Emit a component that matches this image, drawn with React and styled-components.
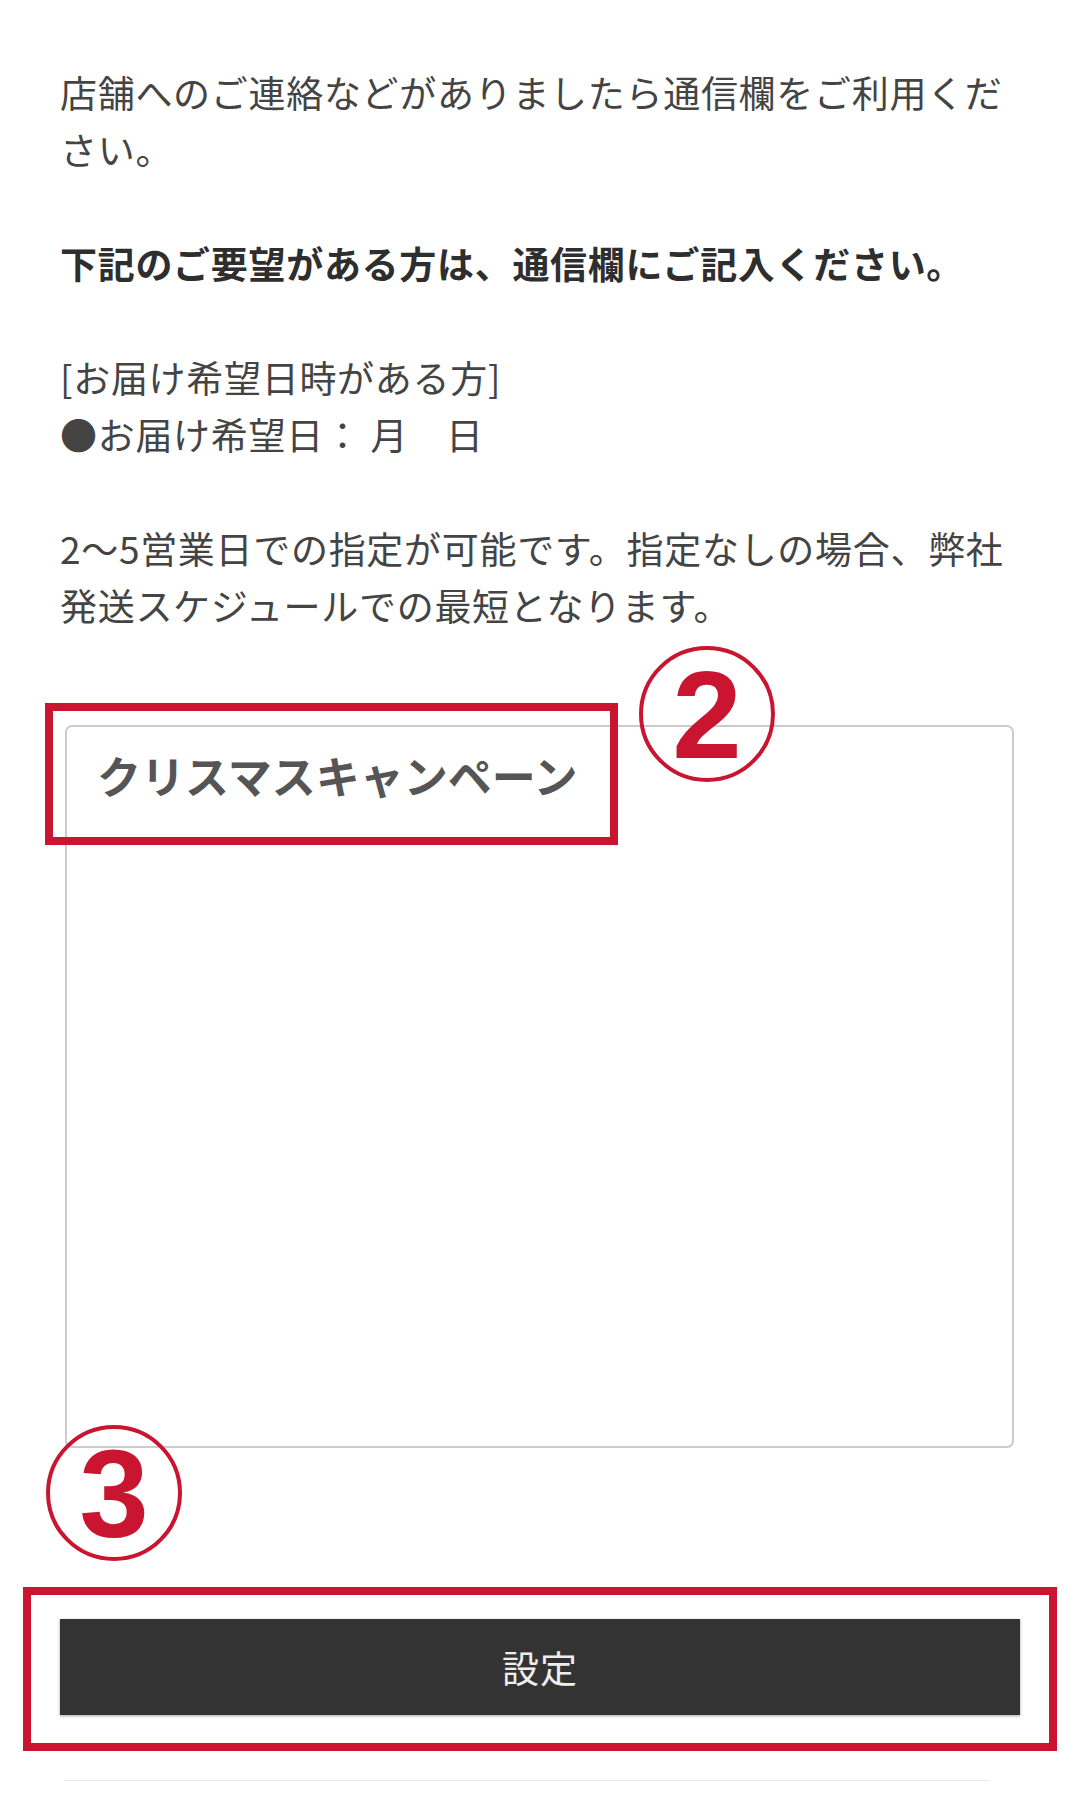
import React from "react";
import styled, { createGlobalStyle } from "styled-components";

const RED = "#c9152f";

const GlobalStyle = createGlobalStyle`
  html, body {
    margin: 0;
    padding: 0;
    background: #fff;
  }
  body {
    font-family: "Noto Sans CJK JP", "Noto Sans", sans-serif;
    -webkit-font-smoothing: antialiased;
  }
`;

const App = () => {
  return (
    <Page>
      <GlobalStyle />
      <Notes>
        <Para>店舗へのご連絡などがありましたら通信欄をご利用ください。</Para>
        <Para $bold>下記のご要望がある方は、通信欄にご記入ください。</Para>
        <Para>
          [お届け希望日時がある方]
          <br />
          ●お届け希望日： 月　日
        </Para>
        <Para>2〜5営業日での指定が可能です。指定なしの場合、弊社発送スケジュールでの最短となります。</Para>
      </Notes>

      <MemoWrap>
        <Memo>クリスマスキャンペーン</Memo>
        <MarkBox $top={-22} $left={-20} $width={573} $height={142} />
        <StepBadge $top={-79} $left={574}>2</StepBadge>
      </MemoWrap>

      <ButtonWrap>
        <SubmitButton type="button">設定</SubmitButton>
        <MarkBox $top={-32} $left={-37} $right={-37} $bottom={-36} />
        <StepBadge $top={-194} $left={-14}>3</StepBadge>
      </ButtonWrap>

      <Divider />
    </Page>
  );
};

export default App;

const Page = styled.div`
  width: 1080px;
  min-height: 1800px;
  box-sizing: border-box;
  padding: 64px 0 0 60px;
  background: #fff;
  display: flex;
  flex-direction: column;
  align-items: flex-start;
`;

const Notes = styled.div`
  width: 962px;
  display: flex;
  flex-direction: column;
  gap: 57px;
`;

const Para = styled.p`
  margin: 0;
  font-size: 37px;
  line-height: 57px;
  letter-spacing: 0.7px;
  color: ${(p) => (p.$bold ? "#2e2e2e" : "#444")};
  font-weight: ${(p) => (p.$bold ? 700 : 400)};
`;

const MemoWrap = styled.div`
  position: relative;
  margin: 91px 0 0 5px;
  width: 949px;
`;

const Memo = styled.div`
  box-sizing: border-box;
  height: 723px;
  border: 2px solid #cbcbcb;
  border-radius: 7px;
  background: #fff;
  padding: 17px 30px;
  font-size: 44px;
  line-height: 62px;
  font-weight: 700;
  color: #555;
`;

const MarkBox = styled.div`
  position: absolute;
  box-sizing: border-box;
  border: 8px solid ${RED};
  pointer-events: none;
  top: ${(p) => p.$top}px;
  left: ${(p) => p.$left}px;
  ${(p) => (p.$width ? `width: ${p.$width}px;` : "")}
  ${(p) => (p.$height ? `height: ${p.$height}px;` : "")}
  ${(p) => (p.$right !== undefined ? `right: ${p.$right}px;` : "")}
  ${(p) => (p.$bottom !== undefined ? `bottom: ${p.$bottom}px;` : "")}
`;

const StepBadge = styled.div`
  position: absolute;
  top: ${(p) => p.$top}px;
  left: ${(p) => p.$left}px;
  width: 136px;
  height: 136px;
  box-sizing: border-box;
  border: 4px solid ${RED};
  border-radius: 50%;
  display: flex;
  align-items: center;
  justify-content: center;
  font-family: "Liberation Sans", Arial, sans-serif;
  font-weight: 700;
  font-size: 125px;
  line-height: 1;
  color: ${RED};
`;

const ButtonWrap = styled.div`
  position: relative;
  margin-top: 171px;
  width: 960px;
  display: flex;
`;

const SubmitButton = styled.button`
  flex: 1;
  display: flex;
  align-items: center;
  justify-content: center;
  height: 96px;
  border: none;
  border-radius: 0;
  background: #333;
  box-shadow: 0 1px 3px rgba(0, 0, 0, 0.35);
  font-family: "Noto Sans CJK JP", sans-serif;
  font-size: 37px;
  color: #eee;
  letter-spacing: 1px;
  cursor: pointer;
`;

const Divider = styled.div`
  margin: 65px 0 0 4px;
  width: 926px;
  height: 1px;
  background: #e9e9e9;
`;
